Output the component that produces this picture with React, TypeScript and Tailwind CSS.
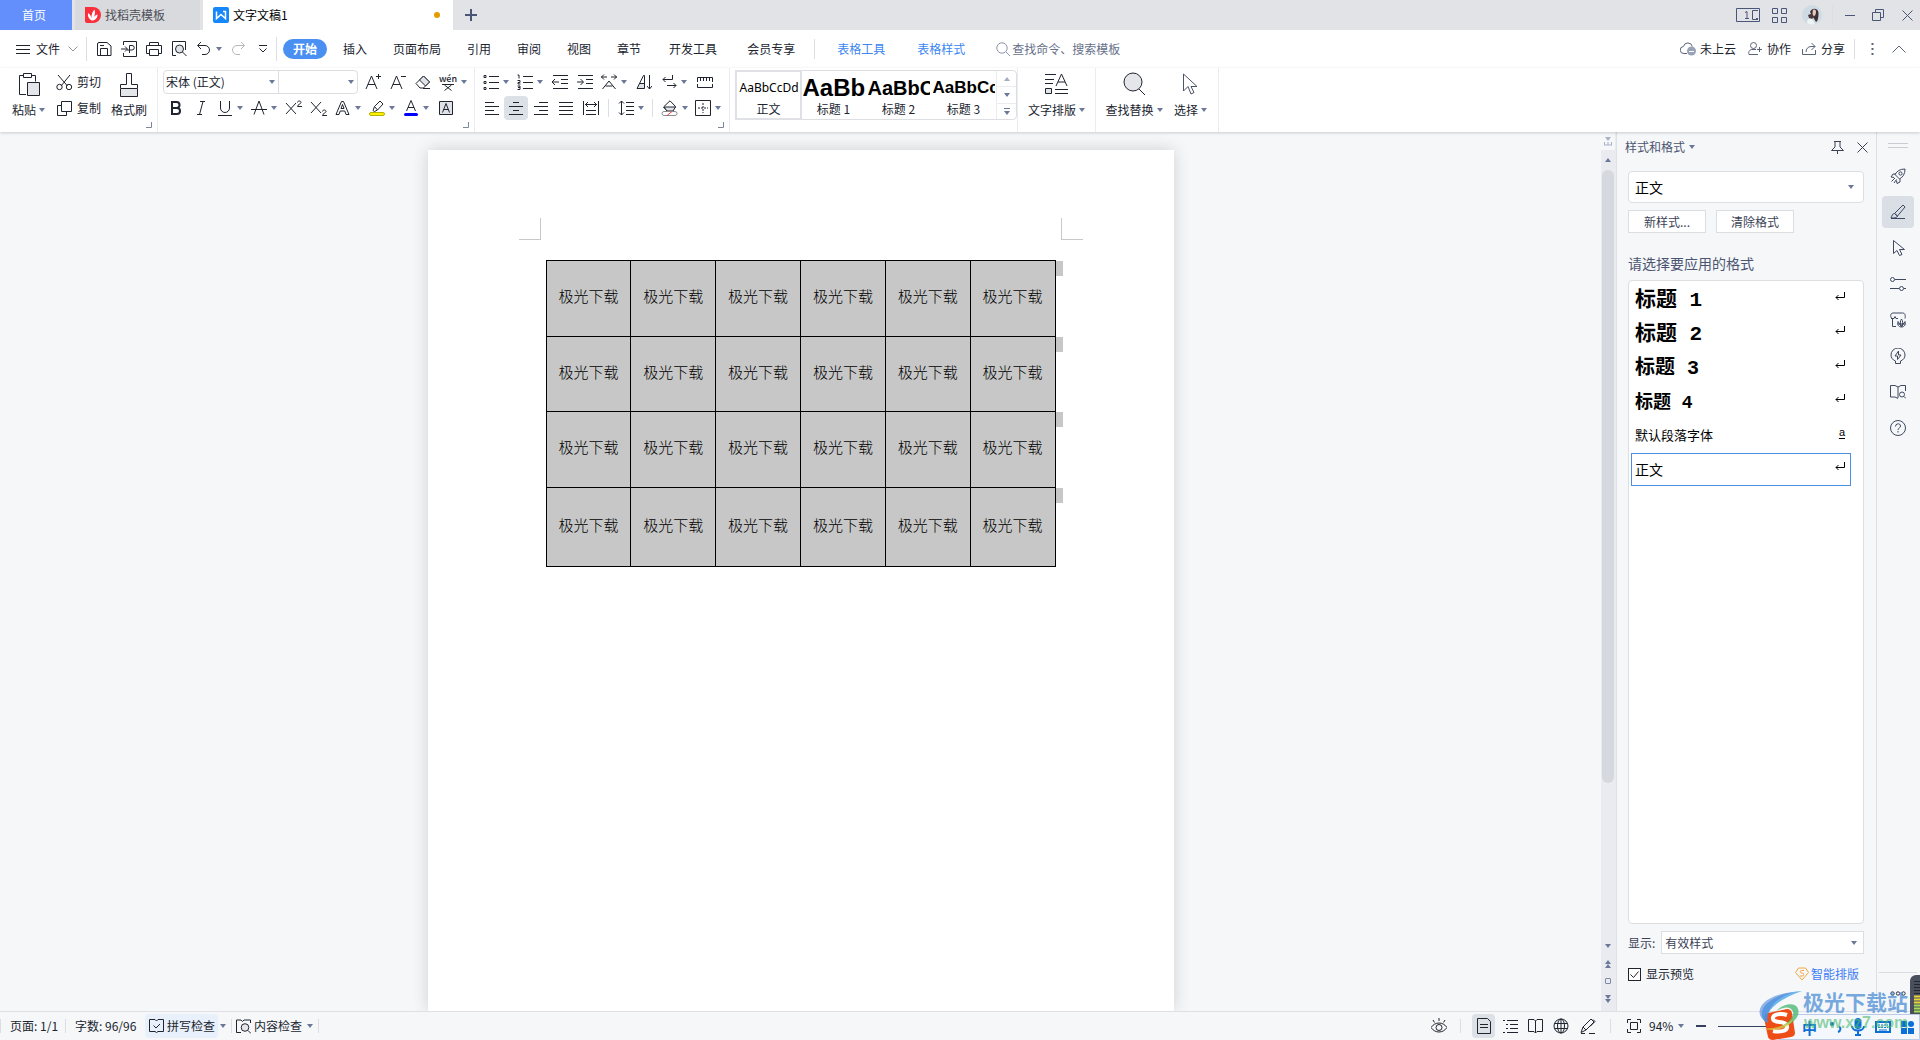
import { useState } from "react";
import type { ReactNode } from "react";

type IconProps = {
  w?: number;
  h?: number;
  sw?: number;
  className?: string;
  children: ReactNode;
};

function Icon({ w = 16, h = 16, sw = 1, className = "", children }: IconProps) {
  return (
    <svg
      width={w}
      height={h}
      viewBox={`0 0 ${w} ${h}`}
      fill="none"
      stroke="currentColor"
      strokeWidth={sw}
      className={`shrink-0 ${className}`}
      aria-hidden="true"
    >
      {children}
    </svg>
  );
}

function Caret({ className = "" }: { className?: string }) {
  return (
    <svg width="6" height="4" viewBox="0 0 6 4" className={`shrink-0 text-[#6b7898] ${className}`} aria-hidden="true">
      <path d="M0 0h6L3 4z" fill="currentColor" />
    </svg>
  );
}

function Divider({ className = "" }: { className?: string }) {
  return <span className={`w-px shrink-0 bg-[#dcdee2] ${className}`} />;
}

type ToolProps = {
  label: string;
  className?: string;
  caret?: boolean;
  active?: boolean;
  children: ReactNode;
};

function Tool({ label, className = "w-[25px]", caret = false, active = false, children }: ToolProps) {
  return (
    <button
      type="button"
      aria-label={label}
      title={label}
      className={`flex h-6 shrink-0 items-center justify-center rounded-sm ${caret ? "gap-1" : ""} ${
        active ? "bg-[#dce1e7]" : ""
      } ${className}`}
    >
      {children}
      {caret ? <Caret /> : null}
    </button>
  );
}

/* ---------- title bar ---------- */

function TitleBar() {
  return (
    <header className="flex h-[30px] shrink-0 bg-[#e2e3e7] text-[#4a5677]">
      <button type="button" className="w-[72px] bg-[#628ffc] pr-1 text-[12px] text-white">
        首页
      </button>
      <button type="button" className="ml-[3px] flex w-[125px] items-center gap-1 bg-[#d9dadd] pl-[10px] text-[12px] text-[#4c4f57]">
        <svg width="16" height="16" viewBox="0 0 16 16" aria-hidden="true">
          <path d="M0 0h8a8 8 0 0 1 0 16H2a2 2 0 0 1-2-2z" fill="#f9303c" />
          <path d="M6.500 13.500C3.500 12 2.500 9 3 6c2 1 3 3 3.500 5C6.500 8 7 5 9.500 2.500c1 3 .5 6-1.500 9 1-2 2.500-3.500 4.500-4 0 3.500-2 6-6 6z" fill="#fff" />
        </svg>
        找稻壳模板
      </button>
      <div className="ml-[3px] flex w-[250px] items-center bg-white pl-[10px] pr-[13px] text-[12px] text-black">
        <svg width="16" height="16" viewBox="0 0 16 16" className="mr-1" aria-hidden="true">
          <rect width="16" height="16" rx="2" fill="#1587fb" />
          <path d="M3.500 4.500v7L8 7.500l4.500 4v-7H10" fill="none" stroke="#fff" strokeWidth="1.500" />
        </svg>
        <span className="flex-1">文字文稿1</span>
        <span className="size-[6px] rounded-full bg-[#e39b00]" />
      </div>
      <button type="button" aria-label="新建" className="flex w-[36px] items-center justify-center">
        <Icon w={12} h={12} sw={2}>
          <path d="M6 0v12M0 6h12" />
        </Icon>
      </button>
      <div className="flex-1" />
      <div className="flex items-center">
        <Icon w={24} h={14}>
          <path d="M.5.5h23v13H.5zM9 4.500l2-1v7M9 10.500h4" />
          <path d="M22 2.500h-5.500v9H22M20 10.500h2" />
        </Icon>
        <Icon w={15} h={15} className="ml-[12px]">
          <path d="M.5.5h5v5h-5zM9.500.5h5v5h-5zM.5 9.500h5v5h-5zM9.500 9.500h5v5h-5z" />
        </Icon>
        <svg width="20" height="20" viewBox="0 0 20 20" className="ml-[15px]" aria-hidden="true">
          <circle cx="10" cy="10" r="10" fill="#cfdbe2" />
          <path d="M8 7c1-4 8-5 8.500 1 0 4-.5 8-2.500 9l-3-5z" fill="#3b2f35" />
          <path d="M6 10l5-2 2 3-3 3-3-1z" fill="#4a3a3e" />
          <path d="M11 5c2-1 3 0 3 2s-1 4-2 4-2-3-1-6z" fill="#e9c7b8" />
          <path d="M5 18c0-4 2-5 5-4l3 5c-3 1-6 1-8-1z" fill="#eef3f5" />
        </svg>
        <Divider className="ml-[10px] h-5 bg-[#cbccd0]" />
        <button type="button" aria-label="最小化" className="ml-[12px]">
          <Icon w={10} h={12}>
            <path d="M0 6.500h10" />
          </Icon>
        </button>
        <button type="button" aria-label="还原" className="ml-[17px]">
          <Icon w={12} h={12}>
            <path d="M.5 3.500h8v8h-8zM3.500 3.500v-3h8v8h-3" />
          </Icon>
        </button>
        <button type="button" aria-label="关闭" className="ml-[18px] mr-[7px]">
          <Icon w={11} h={11}>
            <path d="M.5.5l10 10M10.500.5l-10 10" />
          </Icon>
        </button>
      </div>
    </header>
  );
}

/* ---------- menu row ---------- */

const narrowTabs = ["插入", "页面布局", "引用", "审阅", "视图", "章节"];
const wideTabs = ["开发工具", "会员专享"];

function MenuBar() {
  return (
    <nav className="flex h-[38px] shrink-0 items-center bg-white text-[12px] text-[#20242f]">
      <button type="button" className="flex items-center pl-4">
        <Icon w={14} h={11} className="mr-[6px]">
          <path d="M0 1.500h14M0 5.500h14M0 9.500h14" />
        </Icon>
        文件
        <Icon w={10} h={6} className="ml-2 text-[#8e939d]">
          <path d="M.5.5L5 5 9.500.5" />
        </Icon>
      </button>
      <Divider className="ml-2 mr-1 h-6" />
      <Tool label="保存">
        <Icon>
          <path d="M1.500 3A1.500 1.500 0 0 1 3 1.500h8L15 5v9.500H1.500zM4.500 14V7.500h7V14M4 4.500h4" />
        </Icon>
      </Tool>
      <Tool label="输出为PDF">
        <Icon>
          <path d="M2.500 4V.5h13v15h-13V12M0 8h6M4 5.500L6.500 8 4 10.500M8.500 12V4.500H11a2 2 0 0 1 0 4.500H6" />
        </Icon>
      </Tool>
      <Tool label="打印">
        <Icon>
          <path d="M3.500 4V1.500h9V4M3.500 12.500h-3v-8h15v8h-3M3.500 8.500h9v6h-9z" />
        </Icon>
      </Tool>
      <Tool label="打印预览">
        <Icon>
          <path d="M5 14.500H1.500V.5h13V9" />
          <circle cx="8.500" cy="8" r="4" fill="#dfe2e6" />
          <path d="M11.500 11l4 4" />
        </Icon>
      </Tool>
      <Tool label="撤销">
        <Icon>
          <path d="M5 1L1.500 4.500 5 8M2 4.500h7a4.500 4.500 0 0 1 0 9H6" />
        </Icon>
      </Tool>
      <Caret />
      <Tool label="恢复" className="ml-1 w-[24px] text-[#b4b7bd]">
        <Icon>
          <path d="M11 1l3.500 3.500L11 8M14 4.500H7a4.500 4.500 0 0 0 0 9h3" />
        </Icon>
      </Tool>
      <Tool label="自定义快速访问" className="mr-px w-[25px]">
        <Icon w={8} h={8}>
          <path d="M0 .5h8M.5 3.500L4 7l3.500-3.500" />
        </Icon>
      </Tool>
      <Divider className="h-6" />
      <button type="button" className="ml-[6px] mr-[3px] h-5 w-[44px] rounded-full bg-[#4a90f2] font-bold text-white">
        开始
      </button>
      {narrowTabs.map((tab) => (
        <button key={tab} type="button" className="px-[13px]">
          {tab}
        </button>
      ))}
      {wideTabs.map((tab) => (
        <button key={tab} type="button" className="px-[15px]">
          {tab}
        </button>
      ))}
      <Divider className="ml-1 h-5" />
      <button type="button" className="ml-[22px] text-[#3b86f0]">
        表格工具
      </button>
      <button type="button" className="ml-8 text-[#3b86f0]">
        表格样式
      </button>
      <button type="button" className="ml-[31px] flex items-center gap-[2px] text-[#66708a]">
        <Icon w={14} h={14} className="text-[#8b95ab]">
          <circle cx="6" cy="6" r="5.200" />
          <path d="M10 10l4 4" />
        </Icon>
        查找命令、搜索模板
      </button>
      <div className="flex-1" />
      <button type="button" className="flex items-center gap-1">
        <Icon className="text-[#5b6378]">
          <path d="M7 12.500H4a3.500 3.500 0 0 1-.5-7 4.500 4.500 0 0 1 8.800 0" />
          <circle cx="11.500" cy="10" r="4.500" fill="#98a2b6" stroke="none" />
          <path d="M9 10.500h5" stroke="#fff" />
        </Icon>
        未上云
      </button>
      <button type="button" className="ml-3 flex items-center gap-[5px]">
        <Icon w={14} h={14} className="text-[#5b6378]">
          <circle cx="5.500" cy="3.500" r="3" />
          <path d="M10 12.500H1c-1-3 1-5 3-5h4M9 7.500h5M11.500 5v5" />
        </Icon>
        协作
      </button>
      <button type="button" className="ml-[11px] flex items-center gap-[5px]">
        <Icon w={14} h={14} className="text-[#5b6378]">
          <path d="M.5 7v5.500h13V8M9.500 1L13 4.500 9.500 8M13 4.500H9C6 4.500 4 7 4 10" />
        </Icon>
        分享
      </button>
      <Divider className="ml-[9px] h-5" />
      <button type="button" aria-label="更多" className="ml-4">
        <Icon w={3} h={12} sw={2} className="text-[#5b6378]">
          <path d="M1.500 0v2M1.500 5v2M1.500 10v2" />
        </Icon>
      </button>
      <button type="button" aria-label="收起功能区" className="ml-[18px] mr-[14px]">
        <Icon w={14} h={8} className="text-[#5b6378]">
          <path d="M.5 7.500L7 1l6.500 6.500" />
        </Icon>
      </button>
    </nav>
  );
}

/* ---------- ribbon ---------- */

function GroupCorner() {
  return (
    <Icon w={6} h={6} className="absolute bottom-[4px] right-[5px] text-[#7d879c]">
      <path d="M0 5.500h5.500V0" />
    </Icon>
  );
}

function ClipboardGroup() {
  return (
    <section className="relative flex w-[157px] pl-[12px]">
      <button type="button" className="flex flex-col items-center">
        <Icon w={22} h={24} className="mt-[5px]">
          <path d="M6 2.500H1.500v19H8M14 2.500h3.500v6M5.500.5h8v4h-8z" />
          <path d="M9.500 9.500h12v13h-12z" fill="#e4e6e9" />
        </Icon>
        <span className="mt-1 flex items-center gap-[3px]">
          粘贴
          <Caret />
        </span>
      </button>
      <div className="ml-[11px] flex flex-col gap-2 pt-[5px]">
        <button type="button" className="flex items-center gap-1">
          <Icon w={17} h={17}>
            <path d="M2 1l9.500 11M14 1L5 12" />
            <circle cx="3.500" cy="13" r="2.700" />
            <circle cx="13" cy="13" r="2.700" />
          </Icon>
          剪切
        </button>
        <button type="button" className="flex items-center gap-1">
          <Icon w={17} h={17}>
            <path d="M5.500 1.500h10v10h-10zM5 5.500H1.500v10h9V12" />
          </Icon>
          复制
        </button>
      </div>
      <button type="button" className="ml-[10px] flex flex-col items-center">
        <Icon w={20} h={24} className="mt-[5px]">
          <path d="M1.500 15.500h17v8h-17z" fill="#e4e6e9" />
          <path d="M1.500 15v-3.500h6v-11h5v11h6V15" />
        </Icon>
        <span className="mt-1">格式刷</span>
      </button>
      <GroupCorner />
    </section>
  );
}

function FontGroup() {
  return (
    <section className="relative flex w-[316px] flex-col gap-[2px] pl-[5px] pt-[2px]">
      <div className="flex items-center">
        <div className="flex h-6 rounded-sm border border-[#dcdee2] bg-white">
          <div className="relative w-[115px] border-r border-[#dcdee2]">
            <select aria-label="字体" className="size-full appearance-none bg-transparent pl-[2px] text-[12px] outline-none">
              <option>宋体 (正文)</option>
            </select>
            <Caret className="pointer-events-none absolute right-[3px] top-[9px]" />
          </div>
          <div className="relative w-[78px]">
            <select aria-label="字号" className="size-full appearance-none bg-transparent pl-1 text-[12px] outline-none">
              <option value="" />
            </select>
            <Caret className="pointer-events-none absolute right-[3px] top-[9px]" />
          </div>
        </div>
        <Tool label="增大字号" className="ml-[3px] w-[24px]">
          <Icon>
            <path d="M1 15L6.500 2 12 15M3 10.500h7M11 2.500h5M13.500 0v5" />
          </Icon>
        </Tool>
        <Tool label="减小字号">
          <Icon>
            <path d="M1 15L6.500 2 12 15M3 10.500h7M11 2.500h5" />
          </Icon>
        </Tool>
        <Tool label="清除格式">
          <Icon>
            <path d="M1 9.500L8.500 2l6 6-6 6H5z" />
            <path d="M4.500 6L8.500 2l6 6-4 4z" fill="#dfe2e6" />
            <path d="M8 14.500h7" />
          </Icon>
        </Tool>
        <Tool label="拼音指南" caret className="w-[36px]">
          <span className="flex flex-col items-center">
            <span className="text-[9px] font-medium leading-[9px]">wén</span>
            <Icon w={12} h={8}>
              <path d="M0 1.500h12M2.500 2l7 5.500M9.500 2l-7 5.500" />
            </Icon>
          </span>
        </Tool>
      </div>
      <div className="flex items-center">
        <Tool label="加粗" className="w-[25px]">
          <Icon sw={2}>
            <path d="M4 2h4.500a3 3 0 0 1 0 6H4zM4 8h5a3 3 0 0 1 0 6H4z" />
          </Icon>
        </Tool>
        <Tool label="倾斜" className="w-[25px]">
          <Icon>
            <path d="M7 1.500h5M4 14.500h5M10 1.500L6.500 14.500" />
          </Icon>
        </Tool>
        <Tool label="下划线" caret className="w-[34px]">
          <Icon>
            <path d="M3.500 1v7a4.500 4.500 0 0 0 9 0V1M1 15.500h14" />
          </Icon>
        </Tool>
        <Tool label="删除线" caret className="w-[33px]">
          <Icon>
            <path d="M3 14.500L8 1l5 13.500M0 9.500h16" />
          </Icon>
        </Tool>
        <Tool label="上标" className="w-[26px]">
          <Icon w={17}>
            <path d="M1 3l10 11M11 3L1 14" />
            <path d="M12.500 2.500c0-2 3.500-2 3.500 0 0 1.500-3.500 2-3.500 4H17" />
          </Icon>
        </Tool>
        <Tool label="下标" className="w-[25px]">
          <Icon w={17}>
            <path d="M1 2l10 11M11 2L1 13" />
            <path d="M12.500 11.500c0-2 3.500-2 3.500 0 0 1.500-3.500 2-3.500 4H17" />
          </Icon>
        </Tool>
        <Tool label="文字效果" caret className="w-[34px]">
          <Icon>
            <path d="M1 14.500L6.500 1.500h2L14 14.500h-3L9.800 11H5.200L4 14.500zM6 8.500h3L7.500 4.500z" />
          </Icon>
        </Tool>
        <Tool label="突出显示" caret className="w-[34px]">
          <Icon>
            <path d="M4 10.500l1.500-4L11 1l3 3-5.500 6-3 1.500zM5.500 6.500l3 3.500" />
            <rect x=".5" y="12.500" width="15" height="3" rx="1.500" fill="#fdf000" stroke="#b5b100" />
          </Icon>
        </Tool>
        <Tool label="字体颜色" caret className="w-[34px]">
          <Icon>
            <path d="M3.500 11L8 .5 12.500 11M5 7.500h6" />
            <rect x="1" y="13" width="14" height="3" rx="1.500" fill="#0000fe" stroke="none" />
          </Icon>
        </Tool>
        <Tool label="字符底纹" className="w-[26px]">
          <Icon>
            <path d="M1.500 1.500h13v13h-13z" fill="#dfe2e6" />
            <path d="M4.500 12.500l3.500-9 3.500 9M5.500 9.500h5" />
          </Icon>
        </Tool>
      </div>
      <GroupCorner />
    </section>
  );
}

function ParagraphGroup() {
  return (
    <section className="relative flex w-[254px] flex-col gap-[2px] pl-[4px] pt-[2px]">
      <div className="flex items-center">
        <Tool label="项目符号" caret className="w-[34px]">
          <Icon>
            <path d="M6 2.500h10M6 8.500h10M6 14.500h10M1 1.500h2v2H1zM1 7.500h2v2H1zM1 13.500h2v2H1z" />
          </Icon>
        </Tool>
        <Tool label="编号" caret className="w-[34px]">
          <Icon>
            <path d="M6 2.500h10M6 8.500h10M6 14.500h10M.5 1h1.500v3.500M.5 6.500H3v2H1v1.500h2.500M.5 12H3v3.500H.5M1 13.500h2" />
          </Icon>
        </Tool>
        <Tool label="减少缩进量">
          <Icon>
            <path d="M1 1.500h15M9 5.500h7M9 9.500h7M1 14.500h15M0 8h7M3 5L0 8l3 3" />
          </Icon>
        </Tool>
        <Tool label="增加缩进量">
          <Icon>
            <path d="M1 1.500h15M9 5.500h7M9 9.500h7M1 14.500h15M0 8h6M3.500 5L6.500 8l-3 3" />
          </Icon>
        </Tool>
        <Tool label="中文版式" caret className="w-[34px]">
          <Icon>
            <path d="M1.500 15L8 7l6.500 8M4.500 12h7M0 3h6M3 .5L.5 3 3 5.500M16 3h-6M13 .5L15.500 3 13 5.500" />
          </Icon>
        </Tool>
        <Tool label="排序" className="w-[26px]">
          <Icon>
            <path d="M3 10h5v4H1z" fill="#dfe2e6" stroke="none" />
            <path d="M1 14.500L7.500 1.500h1v13zM4 9.500h4M13.500 1v14M11 12l2.500 3 2.500-3" />
          </Icon>
        </Tool>
        <Tool label="显示编辑标记" caret className="w-[34px]">
          <Icon w={15}>
            <path d="M10.500 1v4.500H1M3.500 3L1 5.500 3.500 8M5 11.500h9M11.500 9l2.500 2.500-2.500 2.500" />
          </Icon>
        </Tool>
        <Tool label="制表位" className="w-[28px]">
          <Icon>
            <path d="M.5 8V3.500h15V8M3.500 4v3M6.500 4v3M9.500 4v3M12.500 4v3M.5 10v3.500h15V10" />
          </Icon>
        </Tool>
      </div>
      <div className="flex items-center">
        <Tool label="左对齐">
          <Icon w={14}>
            <path d="M0 2.500h9M0 6.500h14M0 10.500h9M0 14.500h14" />
          </Icon>
        </Tool>
        <Tool label="居中" active className="w-[24px]">
          <Icon w={14}>
            <path d="M4 2.500h6M0 6.500h14M4 10.500h6M0 14.500h14" />
          </Icon>
        </Tool>
        <Tool label="右对齐">
          <Icon w={14}>
            <path d="M5 2.500h9M0 6.500h14M5 10.500h9M0 14.500h14" />
          </Icon>
        </Tool>
        <Tool label="两端对齐">
          <Icon w={14}>
            <path d="M0 2.500h14M0 6.500h14M0 10.500h14M0 14.500h14" />
          </Icon>
        </Tool>
        <Tool label="分散对齐">
          <Icon>
            <path d="M.5 1v14M15.500 1v14M2 4.500h12M5 2L2.500 4.500 5 7M11 2l2.500 2.500L11 7M3 10.500h10M3 14.500h10" />
          </Icon>
        </Tool>
        <Divider className="ml-[5px] h-[18px]" />
        <Tool label="行距" caret className="ml-[5px] w-[33px]">
          <Icon>
            <path d="M3.500 1v14M1 3.500L3.500 1 6 3.500M1 12.500L3.500 15 6 12.500M8 2.500h8M8 6.500h8M8 10.500h8M8 14.500h8" />
          </Icon>
        </Tool>
        <Divider className="ml-[5px] h-[18px]" />
        <Tool label="底纹颜色" caret className="ml-[4px] w-[34px]">
          <Icon w={17}>
            <path d="M2.500 7L9 .8 14.500 6.500 11.500 11H6z" fill="#fff" />
            <path d="M3 7h11.500L12 11H6z" fill="#dfe2e6" />
            <rect x="1" y="11.500" width="15" height="4" rx="2" fill="#fff" stroke="#8a8d93" />
            <path d="M6 15.500l5-4" stroke="#e8434a" />
          </Icon>
        </Tool>
        <Tool label="边框" caret className="w-[34px]">
          <Icon>
            <path d="M.5.5h15v15H.5z" />
            <path d="M8 3v10M3 8h10" strokeDasharray="2 1" />
          </Icon>
        </Tool>
      </div>
      <GroupCorner />
    </section>
  );
}

const quickStyles = [
  { name: "正文", sample: "AaBbCcDd", sampleClass: "text-[12px] font-['Noto_Sans']" },
  { name: "标题 1", sample: "AaBb", sampleClass: "text-[24px] font-bold" },
  { name: "标题 2", sample: "AaBbC", sampleClass: "text-[20px] font-bold" },
  { name: "标题 3", sample: "AaBbCc", sampleClass: "text-[17px] font-bold" },
];

function StyleGallery() {
  return (
    <section className="w-[287px] pl-[5px] pt-[2px]">
      <div className="flex h-[50px] rounded-sm border border-[#dcdee2]">
        {quickStyles.map((style, i) => (
          <button
            key={style.name}
            type="button"
            className={`flex w-[65px] flex-col items-center ${i === 0 ? "outline-2 -outline-offset-1 outline-[#dfe1e6]" : ""}`}
          >
            <span
              className={`flex h-[32px] w-[62px] items-center overflow-hidden whitespace-nowrap pt-[2px] text-black ${
                i === 0 ? "pl-[2px]" : "font-['Liberation_Sans']"
              } ${style.sampleClass}`}
            >
              {style.sample}
            </span>
            <span className="leading-[12px]">{style.name}</span>
          </button>
        ))}
        <div className="flex flex-1 flex-col border-l border-[#ebecef] text-[#6b7898]">
          <button type="button" aria-label="上一行" className="flex flex-1 items-center justify-center border-b border-[#ebecef]">
            <Caret className="rotate-180 opacity-60" />
          </button>
          <button type="button" aria-label="下一行" className="flex flex-1 items-center justify-center border-b border-[#ebecef]">
            <Caret />
          </button>
          <button type="button" aria-label="更多样式" className="flex flex-1 flex-col items-center justify-center gap-[2px]">
            <span className="h-px w-[6px] bg-[#6b7898]" />
            <Caret />
          </button>
        </div>
      </div>
    </section>
  );
}

function BigTool({ label, className, children }: { label: string; className: string; children: ReactNode }) {
  return (
    <button type="button" className={`flex flex-col items-center ${className}`}>
      <span className="mt-[4px] flex h-6 items-center">{children}</span>
      <span className="mt-[5px] flex items-center gap-[3px] whitespace-nowrap">
        {label}
        <Caret />
      </span>
    </button>
  );
}

function Ribbon() {
  return (
    <div className="z-10 flex h-[64px] shrink-0 bg-white text-[12px] text-[#20242f] shadow-[0_1px_3px_rgba(0,0,0,0.18)]">
      <ClipboardGroup />
      <Divider className="bg-[#ebecef]" />
      <FontGroup />
      <Divider className="bg-[#ebecef]" />
      <ParagraphGroup />
      <Divider className="bg-[#ebecef]" />
      <StyleGallery />
      <Divider className="bg-[#ebecef]" />
      <BigTool label="文字排版" className="w-[77px]">
        <Icon w={24} h={22}>
          <path d="M0 1.500h11M0 6.500h9M0 10.500h8M10 20.500h13M10 16.500h13" />
          <path d="M11 13L16.500 1 22 13M13 9h7" />
          <path d="M.5 15.500h6v5h-6z" fill="#e4e6e9" />
        </Icon>
      </BigTool>
      <Divider className="bg-[#ebecef]" />
      <BigTool label="查找替换" className="ml-[9px] w-[58px]">
        <Icon w={24} h={24}>
          <circle cx="11" cy="10" r="9" fill="#e4e6e9" />
          <path d="M17 17l6 6" />
        </Icon>
      </BigTool>
      <BigTool label="选择" className="ml-[11px] mr-[11px] w-[33px]">
        <Icon w={17} h={24} className="text-[#4c5467]">
          <path d="M1.500 2v17l4.500-4.500L9 22l3-1.500-3-6h6z" fill="#fff" />
        </Icon>
      </BigTool>
      <Divider className="bg-[#ebecef]" />
    </div>
  );
}

/* ---------- document ---------- */

const rowHeights = ["h-[76px]", "h-[75px]", "h-[76px]", "h-[79px]"];
const columns = [1, 2, 3, 4, 5, 6];

function DocumentPage() {
  return (
    <div className="mx-auto flex min-h-0 w-[746px] flex-1 flex-col bg-white pt-[68px] shadow-[0_0_16px_rgba(0,0,0,0.16)]">
      <div className="flex justify-between px-[91px]">
        <span className="size-[22px] border-b border-r border-[#c8c8c8]" />
        <span className="size-[22px] border-b border-l border-[#c8c8c8]" />
      </div>
      <div className="px-[118px] pt-5">
        <table className="w-full table-fixed border-collapse bg-[#c7c7c7] text-[15px] font-light text-black">
          <tbody>
            {rowHeights.map((height, row) => (
              <tr key={row} className={height}>
                {columns.map((col) => (
                  <td key={col} className="relative border border-black p-0 pb-1 text-center">
                    极光下载
                    {col === columns.length ? (
                      <span className="absolute left-full top-0 ml-px h-[15px] w-[7px] bg-[#c7c7c7]" />
                    ) : null}
                  </td>
                ))}
              </tr>
            ))}
          </tbody>
        </table>
      </div>
    </div>
  );
}

function VerticalScroll() {
  return (
    <div className="flex w-[15px] shrink-0 flex-col items-center bg-[#e9ebf0] pr-px text-[#7f8aa5]">
      <div className="flex h-[18px] w-full items-center justify-center bg-[#f5f7f9]">
        <Icon w={8} h={9} className="text-[#a9b1c6]">
          <path d="M1 0h6L4 4z" fill="currentColor" stroke="none" />
          <path d="M0 8h8M.5 5v3M4 5v3M7.500 5v3" />
        </Icon>
      </div>
      <button type="button" aria-label="向上滚动" className="flex h-[20px] items-center">
        <Caret className="rotate-180" />
      </button>
      <div className="h-[613px] w-3 rounded-full bg-[#d5d8df]" />
      <div className="flex-1" />
      <button type="button" aria-label="向下滚动" className="flex h-[18px] items-center">
        <Caret />
      </button>
      <button type="button" aria-label="上一页" className="flex h-[17px] flex-col items-center justify-center">
        <Caret className="rotate-180" />
        <Caret className="rotate-180" />
      </button>
      <button type="button" aria-label="选择浏览对象" className="flex h-[18px] items-center">
        <span className="size-[6px] rounded-[1px] border border-current" />
      </button>
      <button type="button" aria-label="下一页" className="mb-[3px] flex h-[18px] flex-col items-center justify-center">
        <Caret />
        <Caret />
      </button>
    </div>
  );
}

/* ---------- style pane ---------- */

const styleList = [
  { name: "标题 1", className: "text-[21px] font-semibold" },
  { name: "标题 2", className: "text-[21px] font-bold" },
  { name: "标题 3", className: "text-[20px] font-semibold" },
  { name: "标题 4", className: "text-[18px] font-bold" },
  { name: "默认段落字体", className: "text-[13px]" },
  { name: "正文", className: "text-[14px]" },
];

function ReturnMark() {
  return (
    <Icon w={10} h={8}>
      <path d="M9.500 0v5.500H1M3.500 3L1 5.500 3.500 8" />
    </Icon>
  );
}

function StylePane() {
  const [selected, setSelected] = useState("正文");
  const [preview, setPreview] = useState(true);

  return (
    <aside className="flex w-[260px] shrink-0 flex-col border-l border-[#dee0e5] bg-[#f5f7f9] pl-[11px] pr-3 text-[12px] text-[#3b4256]">
      <div className="flex h-[30px] items-center">
        <h2 className="-ml-[3px] text-[12px] text-[#4c5570]">样式和格式</h2>
        <Caret className="ml-1" />
        <div className="flex-1" />
        <button type="button" aria-label="固定">
          <Icon w={13} h={13}>
            <path d="M3 .5h7M4 1v5L.5 9.500h12L9 6V1M6.500 10v3" />
          </Icon>
        </button>
        <button type="button" aria-label="关闭窗格" className="ml-[13px] mr-[-4px]">
          <Icon w={11} h={11}>
            <path d="M.5.5l10 10M10.500.5l-10 10" />
          </Icon>
        </button>
      </div>
      <div className="relative mt-[9px] h-8 shrink-0 rounded-sm border border-[#dcdee2] bg-white">
        <select aria-label="当前样式" className="size-full appearance-none bg-transparent pl-[6px] text-[14px] text-black outline-none">
          <option>正文</option>
        </select>
        <Caret className="pointer-events-none absolute right-[9px] top-[13px]" />
      </div>
      <div className="mt-[7px] flex gap-[10px]">
        <button type="button" className="h-[23px] w-[78px] border border-[#dcdee2] bg-white">
          新样式...
        </button>
        <button type="button" className="h-[23px] w-[78px] border border-[#dcdee2] bg-white">
          清除格式
        </button>
      </div>
      <p className="mt-[19px] text-[14px] leading-[22px] text-[#4c5570]">请选择要应用的格式</p>
      <ul className="mt-[6px] flex min-h-0 flex-1 flex-col gap-px rounded-sm border border-[#dcdee2] bg-white pl-[2px] pr-3 pt-[2px] text-black">
        {styleList.map((style) => (
          <li key={style.name}>
            <button
              type="button"
              onClick={() => setSelected(style.name)}
              className={`flex h-[33px] w-full justify-between border pl-[3px] pr-[5px] ${
                selected === style.name ? "border-[#4a8ee6]" : "border-transparent"
              }`}
            >
              <span
                className={`font-['Liberation_Mono','Noto_Sans_CJK_SC',sans-serif] leading-[34px] ${style.className}`}
              >
                {style.name}
              </span>
              <span className="pt-[8px]">
                {style.name === "默认段落字体" ? (
                  <span className="block font-['Liberation_Sans'] text-[11px] leading-[9px] underline underline-offset-2">a</span>
                ) : (
                  <ReturnMark />
                )}
              </span>
            </button>
          </li>
        ))}
      </ul>
      <div className="mt-[7px] flex items-center gap-[6px]">
        <label htmlFor="style-filter">显示:</label>
        <div className="relative h-[23px] flex-1 border border-[#dcdee2] bg-white">
          <select id="style-filter" className="size-full appearance-none bg-transparent pl-[3px] text-[12px] outline-none">
            <option>有效样式</option>
          </select>
          <Caret className="pointer-events-none absolute right-[6px] top-[9px]" />
        </div>
      </div>
      <div className="mb-[27px] mt-[10px] flex h-[20px] items-center text-[#20242f]">
        <label className="relative flex items-center gap-[5px]">
          <input
            type="checkbox"
            checked={preview}
            onChange={(event) => setPreview(event.target.checked)}
            className="size-[13px] appearance-none border border-[#20242f] bg-white"
          />
          {preview ? (
            <Icon w={9} h={8} className="pointer-events-none absolute left-[2px] top-[6px]">
              <path d="M.5 3.500L3.500 6.500 8.500.5" />
            </Icon>
          ) : null}
          显示预览
        </label>
        <a href="#layout" className="ml-auto mr-[5px] flex items-center gap-[2px] text-[#3b7bf7]">
          <Icon w={14} h={14} className="text-[#f0a63a]">
            <path d="M3.500 1h7l3 4.500L7 13 .5 5.500z" />
            <path d="M9 3.500H6.500C4.500 3.500 5 6 7 6s2.500 3 0 3H5" />
          </Icon>
          智能排版
        </a>
      </div>
    </aside>
  );
}

/* ---------- side rail ---------- */

function RailButton({ label, active = false, children }: { label: string; active?: boolean; children: ReactNode }) {
  return (
    <button
      type="button"
      aria-label={label}
      className={`flex size-8 items-center justify-center rounded-sm ${active ? "bg-[#dadee5]" : ""}`}
    >
      {children}
    </button>
  );
}

function SideRail() {
  return (
    <div className="flex w-[44px] shrink-0 flex-col items-center gap-1 border-l border-[#dee0e5] bg-[#f5f7f9] pr-px pt-[11px] text-[#3f4860]">
      <Icon w={20} h={5} className="mb-[8px] text-[#c9ccd2]">
        <path d="M0 .5h20M0 4.500h20" />
      </Icon>
      <RailButton label="快捷">
        <Icon>
          <path d="M5 6.500C7 3 10 1 15 1c0 5-2 8-5.500 10L8 9.500 6.500 8zM6 6H3L1 9l3 .5M10 11v3l-3 1.500-.5-3M5 10l-3.500 3.500M6.500 11.500L4 15" />
          <circle cx="10.500" cy="5.500" r="1.600" />
        </Icon>
      </RailButton>
      <RailButton label="样式和格式" active>
        <Icon>
          <path d="M1 14.500h14M4.500 9.500L13 1l2 2-7.500 9M4.500 9.500c-2 0-2.500 2-3.500 4.500 3 0 6 0 6.500-2zM4.500 9.500l3 2.500" />
        </Icon>
      </RailButton>
      <RailButton label="选择窗格">
        <Icon>
          <path d="M3.500.5v13l3.500-3 2.500 5 2.500-1-2.500-5h5z" />
        </Icon>
      </RailButton>
      <RailButton label="属性">
        <Icon>
          <circle cx="2.500" cy="3.500" r="2" />
          <path d="M5 3.500h11M0 12.500h9M14 12.500h2" />
          <circle cx="11.500" cy="12.500" r="2" />
        </Icon>
      </RailButton>
      <RailButton label="素材">
        <Icon>
          <path d="M2.500 6.500C0 6 0 1 3 1h9.500c3 0 3 3 2.500 5.500M2.500 7v7.500H6M1 6.500h3l1-2 1 2h2" />
          <path d="M11.500 7c1.500 2 1.500 4 0 8-1.500-4-1.500-6 0-8zM8 9.500c-1 3 .5 5.500 3.500 5.500S16 12.500 15 9.500L11.500 15zM7.500 12h8" />
        </Icon>
      </RailButton>
      <RailButton label="备份">
        <Icon>
          <path d="M5.500 13C2.500 12 1 9.500 1 7a7 7 0 0 1 14 0c0 2.500-1.500 5-4.500 6v2.500h-5z" />
          <path d="M8.500 3L5 8h2.500v3.500L11 7H8.500z" />
        </Icon>
      </RailButton>
      <RailButton label="查阅">
        <Icon>
          <path d="M8 14.500l-3-1.500H.5V1.500H5L8 3l3-1.500h4.500V7M8 3v11" />
          <circle cx="12" cy="10.500" r="2.500" />
          <path d="M14 12.500l2 2" />
        </Icon>
      </RailButton>
      <RailButton label="帮助">
        <Icon>
          <circle cx="8" cy="8" r="7.500" />
          <path d="M5.500 6.500c0-3.500 5-3.500 5-.5 0 2-2.500 2-2.500 4M8 11v1.500" />
        </Icon>
      </RailButton>
      <div className="flex-1" />
      <span className="mb-[38px] h-px w-[38px] bg-[#d9dce1]" />
    </div>
  );
}

/* ---------- status bar ---------- */

function StatusBar() {
  return (
    <footer className="flex h-[29px] shrink-0 items-center border-t border-[#dee0e5] bg-[#f5f7f9] text-[12px] text-[#20242f]">
      <Divider className="mr-[9px] h-[14px]" />
      <span className="w-[55px]">页面: 1/1</span>
      <Divider className="mr-[9px] h-[14px]" />
      <span className="w-[70px]">字数: 96/96</span>
      <button type="button" className="flex h-6 w-[73px] items-center gap-[3px] rounded-sm bg-[#e8f1fb] pl-1">
        <Icon w={15} h={14}>
          <path d="M7.500 2L6 .5H.5v12H6L7.500 13.500 9 12.500h5.500V.5H9zM4.500 6.500l2.500 2.500L11 5" />
        </Icon>
        拼写检查
      </button>
      <Caret className="ml-[2px]" />
      <Divider className="ml-[5px] h-[14px]" />
      <button type="button" className="ml-1 flex items-center gap-[3px]">
        <Icon w={15} h={15}>
          <path d="M5 13.500H.5V1H5l1.500 1.500L8 1h6.500v3" />
          <circle cx="9" cy="8.500" r="3.800" fill="#e4e6e9" />
          <path d="M12 11.500l3 3" />
        </Icon>
        内容检查
      </button>
      <Caret className="ml-[5px]" />
      <Divider className="ml-[5px] h-[14px]" />
      <div className="flex-1" />
      <div className="flex items-center">
        <Tool label="护眼模式" className="w-[26px]">
          <Icon>
            <path d="M0 9.500C4 3.500 12 3.500 16 9.500 12 15.500 4 15.500 0 9.500zM8 0v3M2 2l1.500 2.500M14 2l-1.500 2.500" />
            <circle cx="8" cy="9.500" r="3" />
          </Icon>
        </Tool>
        <Divider className="ml-2 h-[14px]" />
        <Tool label="页面视图" active className="ml-[11px] w-[23px]">
          <Icon w={14}>
            <path d="M.5.5h10l3 3v12H.5zM3 6.500h8M3 9.500h8" />
          </Icon>
        </Tool>
        <Tool label="大纲" className="ml-[2px] w-[26px]">
          <Icon w={15}>
            <path d="M0 2.500h2M4 2.500h11M3 6.500h2M7 6.500h8M3 10.500h2M7 10.500h8M0 14.500h2M4 14.500h11" />
          </Icon>
        </Tool>
        <Tool label="阅读版式">
          <Icon w={15}>
            <path d="M7.500 3L6 1.500H.5v12H6L7.500 15 9 13.500h5.500v-12H9zM7.500 3v12" />
          </Icon>
        </Tool>
        <Tool label="Web版式" className="w-[26px]">
          <Icon>
            <circle cx="8" cy="8" r="7" />
            <ellipse cx="8" cy="8" rx="3.500" ry="7" />
            <path d="M1.500 5.500h13M1.500 10.500h13M8 1v14" />
          </Icon>
        </Tool>
        <Tool label="写作模式" className="w-[28px]">
          <Icon>
            <path d="M1 14.500L3 9l8-8 3 3-8 8zM3 9l3 3M9 15.500h6M1 15.500h4M13 1.500l2 2-5 5" />
          </Icon>
        </Tool>
        <Divider className="ml-[8px] h-[14px]" />
        <Tool label="最佳缩放" className="ml-[10px] w-[26px]">
          <Icon w={14} h={14}>
            <path d="M.5 4V.5H4M10 .5h3.500V4M13.500 10v3.500H10M4 13.500H.5V10M3.500 3.500h7v7h-7z" />
          </Icon>
        </Tool>
        <span className="ml-[2px] w-[26px]">94%</span>
        <Caret className="ml-[3px]" />
        <button type="button" aria-label="缩小" className="ml-[12px] h-[2px] w-[10px] bg-[#34405e]" />
        <input
          type="range"
          aria-label="缩放"
          defaultValue={94}
          max={500}
          className="ml-[12px] mr-[62px] h-px w-[140px] appearance-none bg-[#34405e] [&::-webkit-slider-thumb]:appearance-none"
        />
      </div>
    </footer>
  );
}

/* ---------- floating input bar and site mark ---------- */

function FloatingCorner() {
  return (
    <div className="absolute bottom-0 right-0 z-20 h-[66px] w-[162px]">
      <div className="absolute right-0 top-[1px] h-[40px] w-[10px] rounded-tl-md bg-[#4a4f5e]">
        <svg width="6" height="32" viewBox="0 0 6 32" className="ml-1 mt-[6px]" aria-hidden="true">
          <path d="M0 .5h6M0 3.500h6M0 6.500h6M0 9.500h6M0 12.500h6" stroke="#23262f" />
          <path d="M0 15.500h6M0 18.500h6M0 21.500h6" stroke="#e9d63c" strokeWidth="2" />
          <path d="M0 24.500h6M0 27.500h6M0 30.500h6" stroke="#a6dd54" strokeWidth="2" />
        </svg>
      </div>
      <Icon w={16} h={5} className="absolute right-[14px] top-[17px] text-[#2b3247]">
        <circle cx="2.500" cy="2.500" r="1.700" />
        <circle cx="8" cy="2.500" r="1.700" />
        <circle cx="13.500" cy="2.500" r="1.700" />
      </Icon>
      <div className="absolute bottom-0 right-0 flex h-[26px] w-[146px] items-center rounded-l-md border border-[#b9cbe6] bg-[#f4f7fb] pl-[27px] text-[#0b6fd6]">
        <span className="mr-[12px] text-[15px] font-bold leading-none">中</span>
        <Icon w={13} h={12}>
          <circle cx="3" cy="3" r="2" fill="currentColor" stroke="none" />
          <path d="M10 6c2 0 2 4-1 5" strokeWidth="2" />
        </Icon>
        <Icon w={14} h={18} sw={2} className="ml-[9px]">
          <rect x="4.500" y="1" width="5" height="9" rx="2.500" fill="currentColor" />
          <path d="M1 8c0 6 12 6 12 0M7 13v4M4 17h6" />
        </Icon>
        <Icon w={16} h={12} sw={2} className="ml-[10px]">
          <path d="M1 1h14v10H1z" />
          <path d="M3 4h10M3 6.500h10" strokeDasharray="2 1" strokeWidth="1" />
          <path d="M4 9h8" strokeWidth="1" />
        </Icon>
        <svg width="13" height="13" viewBox="0 0 13 13" className="ml-[10px]" fill="currentColor" aria-hidden="true">
          <path d="M0 0h6v6H0zM0 7h6v6H0zM7 7h6v6H7z" />
          <circle cx="10" cy="3" r="3" />
        </svg>
      </div>
      <svg width="44" height="50" viewBox="0 0 44 50" className="absolute bottom-0 left-0" aria-hidden="true">
        <path
          d="M10 23l19-4q4 0 5 4l3 20q0 3-4 4l-18 3q-4 0-5-3L6 28q0-4 4-5z"
          fill="#ee4d16"
        />
        <path d="M29 25c-6-2-15-1-14 4s13 1 14 7-9 6-14 5" fill="none" stroke="#fff" strokeWidth="4" />
        <path d="M44 1C26 2 6 10 4 22c-1 6 2 10 6 11-4-10 6-22 34-32z" fill="#4aa6e8" opacity="0.8" />
        <path d="M36 2C18 8 8 18 10 32 2 30-1 22 4 15 10 7 24 3 36 2z" fill="#4f86d8" opacity="0.6" />
        <path d="M18 21c8-8 20-9 22-2 3 9-8 17-18 18 10-5 16-12 12-17-3-4-9-3-16 1z" fill="#4cb874" opacity="0.8" />
        <path d="M3 38c10 2 27-2 33-11-3 11-19 16-33 11z" fill="#d6d94a" opacity="0.7" />
      </svg>
      <span className="absolute left-[45px] top-[14px] text-[21px] font-bold leading-[26px] text-[#4c8ed6]/75">极光下载站</span>
      <span className="absolute bottom-[8px] left-[46px] font-['Liberation_Sans'] text-[16px] font-bold leading-[18px] text-[#4cb86e]/60">
        www.xz7.com
      </span>
    </div>
  );
}

export default function App() {
  return (
    <div className="relative flex h-screen flex-col overflow-hidden bg-[#f5f7f9] font-['Noto_Sans_CJK_SC','Noto_Sans',sans-serif]">
      <TitleBar />
      <MenuBar />
      <Ribbon />
      <div className="flex min-h-0 flex-1">
        <main className="flex min-w-0 flex-1 flex-col overflow-hidden pt-[18px]">
          <DocumentPage />
        </main>
        <VerticalScroll />
        <StylePane />
        <SideRail />
      </div>
      <StatusBar />
      <FloatingCorner />
    </div>
  );
}
